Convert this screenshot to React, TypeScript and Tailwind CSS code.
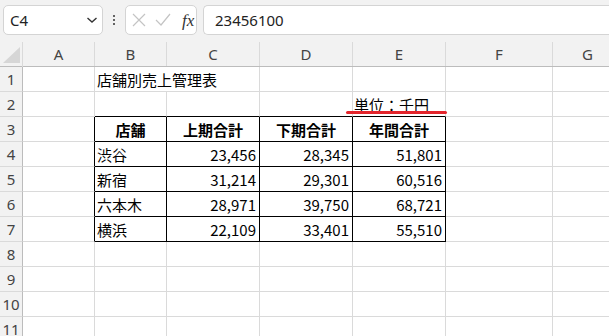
import React from "react";

const COLS = ["A", "B", "C", "D", "E", "F", "G"];
const GRID = "grid grid-cols-[23px_72px_72px_93px_93px_93px_107px_70px]";

type Cell = { text?: string; align?: "l" | "r" | "c"; bold?: boolean };

const tableRows: string[][] = [
  ["渋谷", "23,456", "28,345", "51,801"],
  ["新宿", "31,214", "29,301", "60,516"],
  ["六本木", "28,971", "39,750", "68,721"],
  ["横浜", "22,109", "33,401", "55,510"],
];

const jp = { fontFamily: '"Noto Sans CJK JP", "Noto Sans", sans-serif' };
const ui = { fontFamily: '"Noto Sans", "Liberation Sans", sans-serif' };

function GridCell({
  children,
  rightBlack,
  bottomBlack,
  noRight,
  align = "l",
  bold,
  extra = "",
}: {
  children?: React.ReactNode;
  rightBlack?: boolean;
  bottomBlack?: boolean;
  noRight?: boolean;
  align?: "l" | "r" | "c";
  bold?: boolean;
  extra?: string;
}) {
  const r = noRight ? "border-r-0" : rightBlack ? "border-r border-r-black" : "border-r border-r-[#dadada]";
  const b = bottomBlack ? "border-b border-b-black" : "border-b border-b-[#dadada]";
  const a = align === "r" ? "justify-end pr-[3px]" : align === "c" ? "justify-center" : "justify-start pl-[2px]";
  return (
    <div
      className={`relative h-[25px] flex items-center pt-[2px] whitespace-nowrap text-[15px] text-black ${r} ${b} ${a} ${bold ? "font-bold" : ""} ${extra}`}
      style={jp}
    >
      {children}
    </div>
  );
}

function RowHeader({ n }: { n: number }) {
  return (
    <div
      className="h-[25px] flex items-center justify-center bg-[#f2f2f2] border-r border-r-[#bcbcbc] border-b border-b-[#dadada] text-[15px] text-[#444]"
      style={ui}
    >
      {n}
    </div>
  );
}

export default function App() {
  const rows: React.ReactNode[] = [];
  for (let r = 1; r <= 11; r++) {
    const cells: React.ReactNode[] = [];
    cells.push(<RowHeader key="h" n={r} />);
    for (let c = 0; c < 7; c++) {
      const col = COLS[c];
      let node: React.ReactNode = null;
      let rightBlack = false;
      let bottomBlack = false;
      let noRight = false;
      let align: "l" | "r" | "c" = "l";
      let bold = false;
      const inTableCol = c >= 1 && c <= 4;
      if (r >= 3 && r <= 7) {
        if (c === 0) rightBlack = true;
        if (inTableCol) {
          rightBlack = true;
          bottomBlack = true;
        }
      }
      if (r === 2 && inTableCol) bottomBlack = true;
      if (r === 1 && col === "B") {
        node = <span className="overflow-visible">店舗別売上管理表</span>;
        noRight = true;
      }
      if (r === 2 && col === "E") {
        align = "r";
        node = (
          <>
            <span className="underline underline-offset-[2px] decoration-[1px] mr-[13px]">単位：千円</span>
            <span className="absolute left-[-7px] top-[19px] w-[101px] h-[3px] rounded-full bg-[#e3242b]" />
          </>
        );
      }
      if (r === 3 && inTableCol) {
        align = "c";
        bold = true;
        node = ["店舗", "上期合計", "下期合計", "年間合計"][c - 1];
      }
      if (r >= 4 && r <= 7 && inTableCol) {
        const v = tableRows[r - 4][c - 1];
        align = c === 1 ? "l" : "r";
        node = v;
      }
      cells.push(
        <GridCell
          key={col}
          rightBlack={rightBlack}
          bottomBlack={bottomBlack}
          noRight={noRight}
          align={align}
          bold={bold}
          extra={r === 1 && col === "B" ? "z-10" : ""}
        >
          {node}
        </GridCell>
      );
    }
    rows.push(
      <div key={r} className={GRID}>
        {cells}
      </div>
    );
  }

  return (
    <div className="w-[609px] h-[336px] overflow-hidden bg-white">
      {/* toolbar */}
      <div className="h-[42px] bg-[#f2f2f2] flex items-start pt-[5px] pl-[3px]">
        <div className="w-[100px] h-[30px] bg-white border border-[#d4d4d4] rounded-[5px] flex items-center justify-between pl-[6px] pr-[4px]">
          <span className="text-[15px] text-[#222]" style={ui}>C4</span>
          <svg width="12" height="8" viewBox="0 0 12 8">
            <path d="M1.5 2 L6 6 L10.5 2" fill="none" stroke="#333" strokeWidth="1.4" />
          </svg>
        </div>
        <div className="w-[22px] h-[30px] flex flex-col items-center justify-center gap-[2px]">
          <span className="w-[2px] h-[2px] bg-[#333] rounded-full" />
          <span className="w-[2px] h-[2px] bg-[#333] rounded-full" />
          <span className="w-[2px] h-[2px] bg-[#333] rounded-full" />
        </div>
        <div className="w-[72px] h-[30px] bg-white border border-[#d4d4d4] rounded-[5px] flex items-center pl-[5px]">
          <svg width="14" height="14" viewBox="0 0 14 14" className="ml-[1px]">
            <path d="M1 1 L13 13 M13 1 L1 13" stroke="#c4c4c4" strokeWidth="1.2" fill="none" />
          </svg>
          <svg width="16" height="14" viewBox="0 0 16 14" className="ml-[9px]">
            <path d="M1 7 L6 12 L15 1" stroke="#c4c4c4" strokeWidth="1.2" fill="none" />
          </svg>
          <span
            className="ml-[11px] text-[17px] italic text-[#333] leading-none"
            style={{ fontFamily: '"Liberation Serif", "DejaVu Serif", serif' }}
          >
            fx
          </span>
        </div>
        <div className="ml-[6px] flex-1 h-[30px] bg-white border border-[#d4d4d4] border-r-0 rounded-l-[5px] flex items-center pl-[11px]">
          <span className="text-[15px] text-[#222]" style={ui}>23456100</span>
        </div>
      </div>
      {/* column headers */}
      <div className={`${GRID} h-[25px] bg-[#f2f2f2] border-b border-b-[#bcbcbc]`}>
        <div className="relative h-[25px] border-r border-r-[#dadada]">
          <svg width="17" height="16" viewBox="0 0 17 16" className="absolute left-[3px] top-[5px]">
            <path d="M17 0 L17 16 L0 16 Z" fill="#d6d6d6" />
          </svg>
        </div>
        {COLS.map((c) => (
          <div
            key={c}
            className="h-[24px] flex items-center justify-center border-r border-r-[#dadada] text-[15px] text-[#444]"
            style={ui}
          >
            {c}
          </div>
        ))}
      </div>
      {rows}
    </div>
  );
}
